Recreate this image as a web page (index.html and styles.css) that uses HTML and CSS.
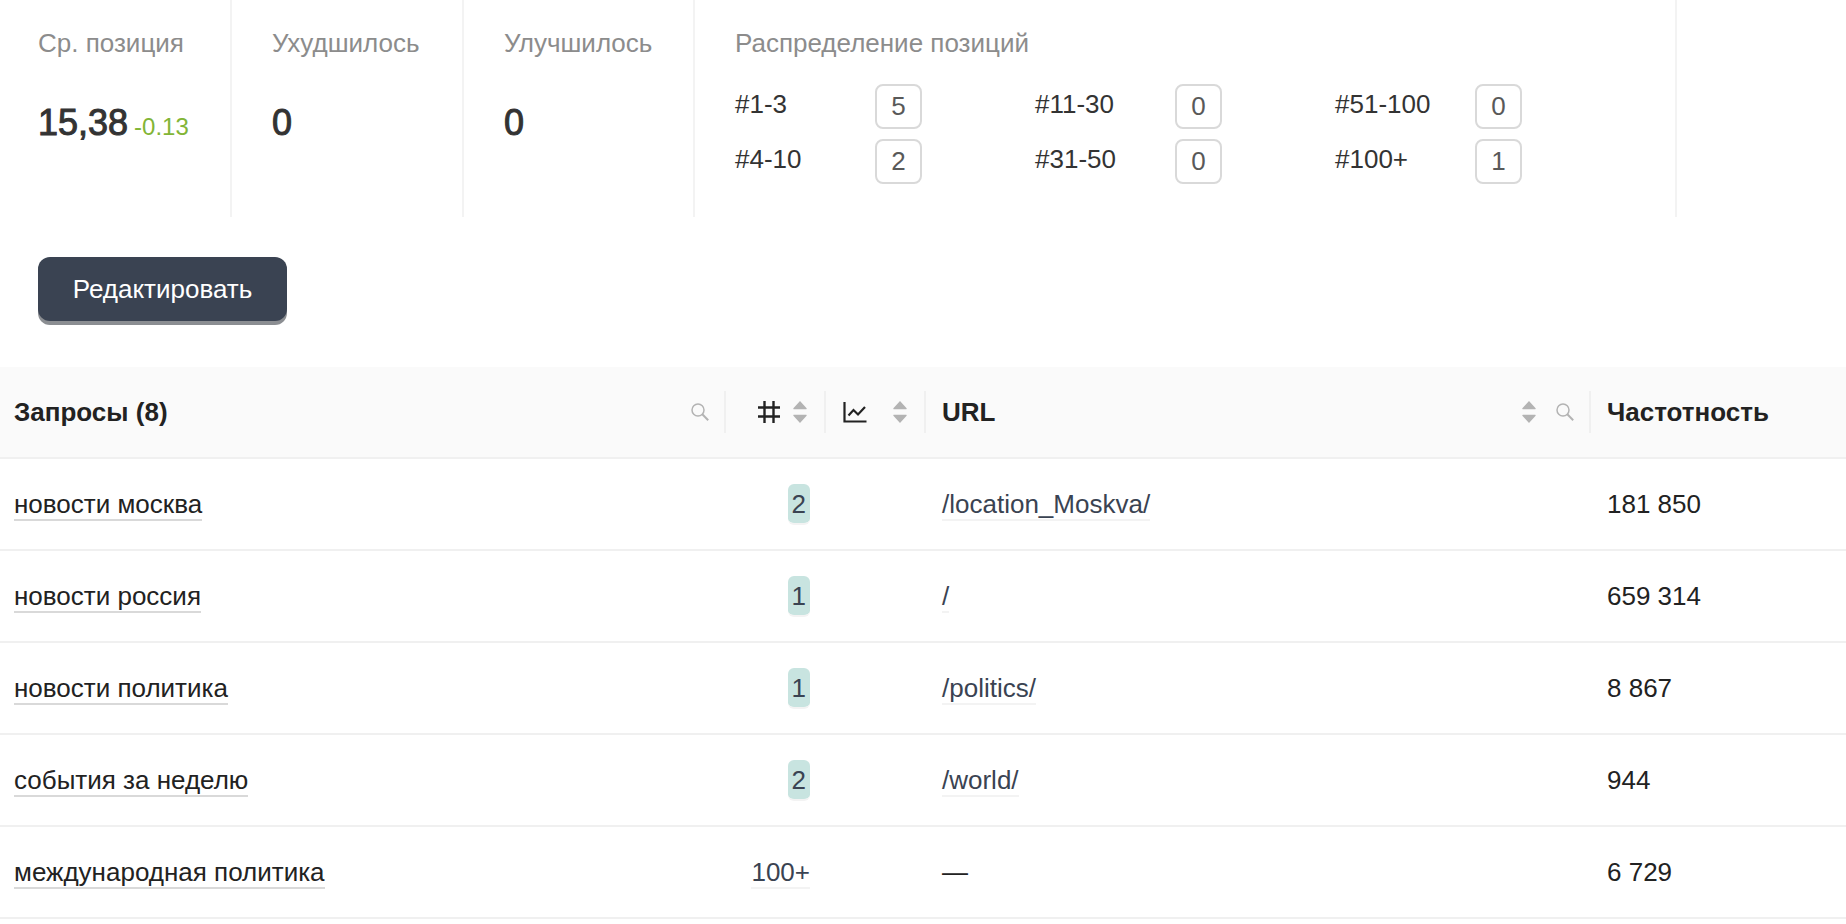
FILE: index.html
```html
<!DOCTYPE html>
<html lang="ru">
<head>
    <meta charset="UTF-8">
    <meta name="viewport" content="width=device-width, initial-scale=1.0">
    <title>Позиции</title>
    <link rel="stylesheet" href="styles.css">
</head>
<body>
    <!-- icons -->
    <svg class="sprite" aria-hidden="true">
        <symbol id="search" viewBox="0 0 18 18">
            <circle cx="7" cy="7" r="6" fill="none" stroke="currentColor" stroke-width="1.5"/>
            <path d="M11.3 11.3L17.2 17.2" fill="none" stroke="currentColor" stroke-width="2"/>
        </symbol>
        <symbol id="sorter" viewBox="0 0 14 22">
            <path d="M7 0L13.6 7.2Q14 8.2 13.2 8.2H.8Q0 8.2 .4 7.2zM7 22L13.6 14.8Q14 13.8 13.2 13.8H.8Q0 13.8 .4 14.8z" fill="currentColor"/>
        </symbol>
        <symbol id="hash" viewBox="0 0 22 22">
            <path d="M6.5 0V22M15.5 0V22M0 6.5H22M0 15.5H22" fill="none" stroke="currentColor" stroke-width="2.4"/>
        </symbol>
        <symbol id="chart" viewBox="0 0 24 22">
            <path d="M1.5 1V20.5H23.5" fill="none" stroke="currentColor" stroke-width="2.2"/>
            <path d="M5.5 14.5L10.5 9L15 13.5L22 6" fill="none" stroke="currentColor" stroke-width="2.2"/>
        </symbol>
    </svg>

    <section class="stats">
        <div class="stat">
            <div class="stat-title">Ср. позиция</div>
            <div class="stat-value">15,38 <span class="diff">-0.13</span></div>
        </div>
        <div class="stat">
            <div class="stat-title">Ухудшилось</div>
            <div class="stat-value">0</div>
        </div>
        <div class="stat">
            <div class="stat-title">Улучшилось</div>
            <div class="stat-value">0</div>
        </div>
        <div class="stat stat-wide">
            <div class="stat-title">Распределение позиций</div>
            <div class="ranges">
                <div class="range"><span class="range-name">#1-3</span><span class="count">5</span></div>
                <div class="range"><span class="range-name">#11-30</span><span class="count">0</span></div>
                <div class="range"><span class="range-name">#51-100</span><span class="count">0</span></div>
                <div class="range"><span class="range-name">#4-10</span><span class="count">2</span></div>
                <div class="range"><span class="range-name">#31-50</span><span class="count">0</span></div>
                <div class="range"><span class="range-name">#100+</span><span class="count">1</span></div>
            </div>
        </div>
    </section>

    <div class="toolbar">
        <button type="button" class="btn">Редактировать</button>
    </div>

    <table class="queries">
        <colgroup>
            <col class="col-query">
            <col class="col-small">
            <col class="col-small">
            <col>
            <col class="col-freq">
        </colgroup>
        <thead>
            <tr>
                <th>
                    <div class="head">
                        <span class="head-title">Запросы (8)</span>
                        <button type="button" class="icon-btn" aria-label="Поиск"><svg class="icon-search"><use href="#search"/></svg></button>
                    </div>
                </th>
                <th>
                    <div class="head head-small head-position">
                        <svg class="icon-hash"><use href="#hash"/></svg>
                        <button type="button" class="icon-btn" aria-label="Сортировать"><svg class="icon-sorter"><use href="#sorter"/></svg></button>
                    </div>
                </th>
                <th>
                    <div class="head head-small">
                        <svg class="icon-chart"><use href="#chart"/></svg>
                        <button type="button" class="icon-btn sort-right" aria-label="Сортировать"><svg class="icon-sorter"><use href="#sorter"/></svg></button>
                    </div>
                </th>
                <th>
                    <div class="head">
                        <span class="head-title">URL</span>
                        <button type="button" class="icon-btn" aria-label="Сортировать"><svg class="icon-sorter"><use href="#sorter"/></svg></button>
                        <button type="button" class="icon-btn" aria-label="Поиск"><svg class="icon-search"><use href="#search"/></svg></button>
                    </div>
                </th>
                <th>
                    <div class="head"><span class="head-title">Частотность</span></div>
                </th>
            </tr>
        </thead>
        <tbody>
            <tr>
                <td><a href="#" class="query">новости москва</a></td>
                <td class="position"><a href="#" class="link badge">2</a></td>
                <td></td>
                <td><a href="#" class="link">/location_Moskva/</a></td>
                <td>181 850</td>
            </tr>
            <tr>
                <td><a href="#" class="query">новости россия</a></td>
                <td class="position"><a href="#" class="link badge">1</a></td>
                <td></td>
                <td><a href="#" class="link">/</a></td>
                <td>659 314</td>
            </tr>
            <tr>
                <td><a href="#" class="query">новости политика</a></td>
                <td class="position"><a href="#" class="link badge">1</a></td>
                <td></td>
                <td><a href="#" class="link">/politics/</a></td>
                <td>8 867</td>
            </tr>
            <tr>
                <td><a href="#" class="query">события за неделю</a></td>
                <td class="position"><a href="#" class="link badge">2</a></td>
                <td></td>
                <td><a href="#" class="link">/world/</a></td>
                <td>944</td>
            </tr>
            <tr>
                <td><a href="#" class="query">международная политика</a></td>
                <td class="position"><a href="#" class="link">100+</a></td>
                <td></td>
                <td>—</td>
                <td>6 729</td>
            </tr>
        </tbody>
    </table>
</body>
</html>
```

FILE: styles.css
```css
* {
    box-sizing: border-box;
}
body {
    margin: 0;
    background: #fff;
    color: #222;
    font-family: "Liberation Sans", Arial, sans-serif;
    font-size: 26px;
    line-height: 40px;
}
.sprite {
    display: none;
}

/* stats */
.stats {
    display: grid;
    grid-template-columns: 232px 232px 231px 1fr;
    margin-right: 169px;
}
.stat {
    height: 217px;
    padding: 23px 0 0 40px;
    border-right: 2px solid #f3f3f3;
    white-space: nowrap;
}
.stat:first-child {
    padding-left: 38px;
}
.stat-title {
    color: #8c8c8c;
}
.stat-value {
    margin-top: 40px;
    color: #333;
    font-size: 36px;
    -webkit-text-stroke: 1px #333;
}
.diff {
    margin-left: -4px;
    color: #82b536;
    font-size: 24px;
    -webkit-text-stroke: 0;
}
.ranges {
    display: grid;
    grid-template-columns: repeat(3, 300px);
    row-gap: 10px;
    margin-top: 21px;
}
.range {
    display: flex;
}
.range-name {
    width: 140px;
    color: #333;
}
.count {
    width: 47px;
    height: 45px;
    border: 2px solid #d9d9d9;
    border-radius: 8px;
    color: #595959;
    line-height: 40px;
    text-align: center;
}

/* button */
.toolbar {
    padding: 40px 38px 46px;
}
.btn {
    display: block;
    min-width: 249px;
    height: 64px;
    padding: 0 32px;
    border: 0;
    border-radius: 12px;
    background: #3a4352;
    box-shadow: 0 4px 0 #8b8e92;
    color: #fff;
    font: inherit;
}

/* table */
.queries {
    width: 100%;
    border-collapse: separate;
    border-spacing: 0;
    table-layout: fixed;
}
.col-query {
    width: 726px;
}
.col-small {
    width: 100px;
}
.col-freq {
    width: 255px;
}
th,
td {
    height: 92px;
    padding: 0 16px;
    border-bottom: 2px solid #f0f0f0;
    text-align: left;
}
th {
    padding: 0;
    background: #fafafa;
}
th:first-child .head,
td:first-child {
    padding-left: 14px;
}
.head {
    display: flex;
    align-items: center;
    gap: 20px;
    height: 42px;
    padding: 0 15px 0 16px;
    border-right: 2px solid #f0f0f0;
}
.head-small {
    padding: 0 17px;
}
th:last-child .head {
    border-right: 0;
}
.head-title {
    flex: 1;
}
.head-position {
    justify-content: flex-end;
    gap: 13px;
}
.sort-right {
    margin-left: auto;
}
.icon-btn {
    display: flex;
    padding: 0;
    border: 0;
    background: none;
    color: #b3b3b3;
}
.icon-search {
    width: 18px;
    height: 18px;
}
.icon-sorter {
    width: 14px;
    height: 22px;
}
.icon-hash {
    width: 22px;
    height: 22px;
}
.icon-chart {
    width: 24px;
    height: 22px;
}
.position {
    text-align: right;
}
.query {
    border-bottom: 2px solid #d9d9d9;
    color: #222;
    text-decoration: none;
}
.link {
    border-bottom: 2px solid #f3f3f3;
    color: #3a4352;
    text-decoration: none;
}
.badge {
    padding: 5px 4px 4px;
    border-radius: 6px;
    background: #c8e4e0;
    background-clip: padding-box;
}
```
